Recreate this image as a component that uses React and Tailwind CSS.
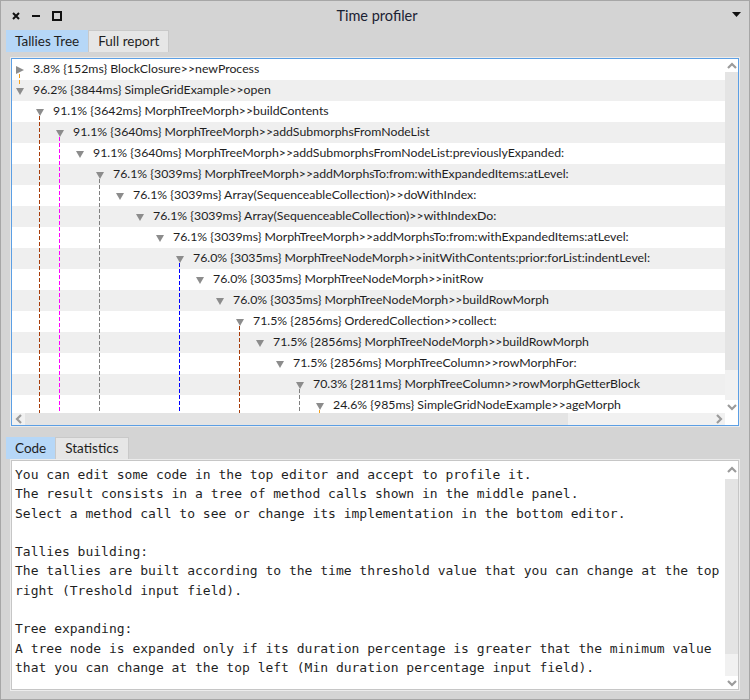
import React from 'react';

const rows = [
  { l: 0, open: false, t: '3.8% {152ms} BlockClosure>>newProcess', line: '#f5a01a', short: true },
  { l: 0, open: true, t: '96.2% {3844ms} SimpleGridExample>>open' },
  { l: 1, open: true, t: '91.1% {3642ms} MorphTreeMorph>>buildContents', line: '#a63c0a' },
  { l: 2, open: true, t: '91.1% {3640ms} MorphTreeMorph>>addSubmorphsFromNodeList', line: '#ff00ff' },
  { l: 3, open: true, t: '91.1% {3640ms} MorphTreeMorph>>addSubmorphsFromNodeList:previouslyExpanded:' },
  { l: 4, open: true, t: '76.1% {3039ms} MorphTreeMorph>>addMorphsTo:from:withExpandedItems:atLevel:', line: '#808080' },
  { l: 5, open: true, t: '76.1% {3039ms} Array(SequenceableCollection)>>doWithIndex:' },
  { l: 6, open: true, t: '76.1% {3039ms} Array(SequenceableCollection)>>withIndexDo:' },
  { l: 7, open: true, t: '76.1% {3039ms} MorphTreeMorph>>addMorphsTo:from:withExpandedItems:atLevel:' },
  { l: 8, open: true, t: '76.0% {3035ms} MorphTreeNodeMorph>>initWithContents:prior:forList:indentLevel:', line: '#0000ff' },
  { l: 9, open: true, t: '76.0% {3035ms} MorphTreeNodeMorph>>initRow' },
  { l: 10, open: true, t: '76.0% {3035ms} MorphTreeNodeMorph>>buildRowMorph' },
  { l: 11, open: true, t: '71.5% {2856ms} OrderedCollection>>collect:', line: '#a63c0a' },
  { l: 12, open: true, t: '71.5% {2856ms} MorphTreeNodeMorph>>buildRowMorph' },
  { l: 13, open: true, t: '71.5% {2856ms} MorphTreeColumn>>rowMorphFor:' },
  { l: 14, open: true, t: '70.3% {2811ms} MorphTreeColumn>>rowMorphGetterBlock', line: '#808080' },
  { l: 15, open: true, t: '24.6% {985ms} SimpleGridNodeExample>>ageMorph', line: '#f5a01a' },
];

const codeLines = [
  'You can edit some code in the top editor and accept to profile it.',
  'The result consists in a tree of method calls shown in the middle panel.',
  'Select a method call to see or change its implementation in the bottom editor.',
  '',
  'Tallies building:',
  'The tallies are built according to the time threshold value that you can change at the top',
  'right (Treshold input field).',
  '',
  'Tree expanding:',
  'A tree node is expanded only if its duration percentage is greater that the minimum value',
  'that you can change at the top left (Min duration percentage input field).',
];

function Tri({ open }) {
  return (
    <svg width="8" height="8" viewBox="0 0 8 8" className="shrink-0">
      {open ? <polygon points="0,1 8,1 4,8" fill="#8c8c8c" /> : <polygon points="0,0 8,4 0,8" fill="#8c8c8c" />}
    </svg>
  );
}

function Arrow({ dir }) {
  const pts = {
    up: '2,8 6,4 10,8',
    down: '2,4 6,8 10,4',
    left: '8,2 4,6 8,10',
    right: '4,2 8,6 4,10',
  }[dir];
  return (
    <svg width="12" height="12" viewBox="0 0 12 12">
      <polyline points={pts} fill="none" stroke="#9b9b9b" strokeWidth="2.2" />
    </svg>
  );
}

export default function App() {
  return (
    <div className="w-[750px] h-[700px] bg-[#d4d4d4] border border-[#a6a6a6] flex flex-col text-[#1e1e1e] overflow-hidden" style={{ fontFamily: 'Lato, "Noto Sans", sans-serif' }}>
      {/* title bar */}
      <div className="h-[29px] shrink-0 flex items-center pl-[11px] pr-[8px]">
        <div className="flex items-center gap-[12px]">
          <svg width="8" height="8" viewBox="0 0 8 8"><path d="M1 1L7 7M7 1L1 7" stroke="#111" strokeWidth="2" /></svg>
          <svg width="8" height="8" viewBox="0 0 8 8"><path d="M0 4H8" stroke="#111" strokeWidth="2" /></svg>
          <svg width="10" height="10" viewBox="0 0 10 10"><rect x="1" y="1" width="8" height="8" fill="none" stroke="#111" strokeWidth="2" /></svg>
        </div>
        <div className="flex-1 text-center text-[14.5px] text-[#1b2233] pr-[40px]">Time profiler</div>
        <svg width="9" height="5" viewBox="0 0 9 5" className="mb-[3px]"><polygon points="0,0 9,0 4.5,5" fill="#111" /></svg>
      </div>

      {/* top tabs */}
      <div className="flex pl-[5px] h-[22px] shrink-0 text-[13.5px]">
        <div className="bg-[#b6d7f7] px-[9px] flex items-center">Tallies Tree</div>
        <div className="bg-[#e6e6e6] border border-[#c9c9c9] border-b-0 px-[9px] flex items-center">Full report</div>
      </div>

      {/* tree pane */}
      <div className="mt-[5px] mx-[9px] p-px bg-[#ececec] shrink-0">
        <div className="border border-[#5c9fe4] bg-white flex flex-col h-[368px]">
          <div className="flex flex-1 min-h-0">
            <div className="flex-1 relative overflow-hidden text-[12.3px]">
              {rows.map((r, i) => (
                <div key={i} className={`h-[21px] flex items-center gap-[9px] whitespace-nowrap ${i % 2 ? 'bg-[#efefef]' : 'bg-white'}`} style={{ paddingLeft: 4 + 20 * r.l }}>
                  <Tri open={r.open} />
                  <span className="pb-px">{r.t}</span>
                </div>
              ))}
              <svg className="absolute left-0 top-0 pointer-events-none" width="400" height="360">
                {rows.map((r, i) =>
                  r.line ? (
                    <line
                      key={i}
                      x1={7.5 + 20 * r.l}
                      x2={7.5 + 20 * r.l}
                      y1={21 * i + 15}
                      y2={r.short ? 21 * i + 25 : 360}
                      stroke={r.line}
                      strokeWidth="1"
                      strokeDasharray="4 2"
                    />
                  ) : null
                )}
              </svg>
            </div>
            <div className="w-[13px] shrink-0 flex flex-col bg-white">
              <div className="h-[13px] flex items-center justify-center"><Arrow dir="up" /></div>
              <div className="h-[298px] bg-[#e4e4e4]" />
              <div className="flex-1 bg-[#f1f1f1]" />
              <div className="h-[13px] flex items-center justify-center"><Arrow dir="down" /></div>
            </div>
          </div>
          <div className="h-[12px] shrink-0 flex bg-white">
            <div className="w-[13px] flex items-center justify-center bg-[#f1f1f1]"><Arrow dir="left" /></div>
            <div className="w-[543px] bg-[#e4e4e4]" />
            <div className="flex-1 bg-[#f1f1f1]" />
            <div className="w-[13px] flex items-center justify-center bg-[#f1f1f1]"><Arrow dir="right" /></div>
            <div className="w-[13px] bg-white" />
          </div>
        </div>
      </div>

      {/* bottom tabs */}
      <div className="flex pl-[5px] h-[22px] mt-[10px] shrink-0 text-[13.5px]">
        <div className="bg-[#b6d7f7] px-[9px] flex items-center">Code</div>
        <div className="bg-[#e6e6e6] border border-[#c9c9c9] border-b-0 px-[9px] flex items-center">Statistics</div>
      </div>

      {/* code pane */}
      <div className="mx-[9px] p-px bg-[#ececec] h-[232px] shrink-0">
        <div className="border border-[#c6c6c6] bg-white flex h-full">
          <div className="flex-1 pl-[3px] pt-[4px] text-[13px] leading-[19.3px] text-[#1f1f1f]" style={{ fontFamily: '"DejaVu Sans Mono", monospace' }}>
            {codeLines.map((c, i) => (
              <div key={i} className="h-[19.3px] whitespace-pre">{c}</div>
            ))}
          </div>
          <div className="w-[13px] shrink-0 flex flex-col bg-white">
            <div className="h-[18px] flex items-center justify-center"><Arrow dir="up" /></div>
            <div className="h-[175px] bg-[#e4e4e4]" />
            <div className="flex-1 bg-[#f1f1f1]" />
            <div className="h-[13px] flex items-center justify-center"><Arrow dir="down" /></div>
          </div>
        </div>
      </div>
    </div>
  );
}
